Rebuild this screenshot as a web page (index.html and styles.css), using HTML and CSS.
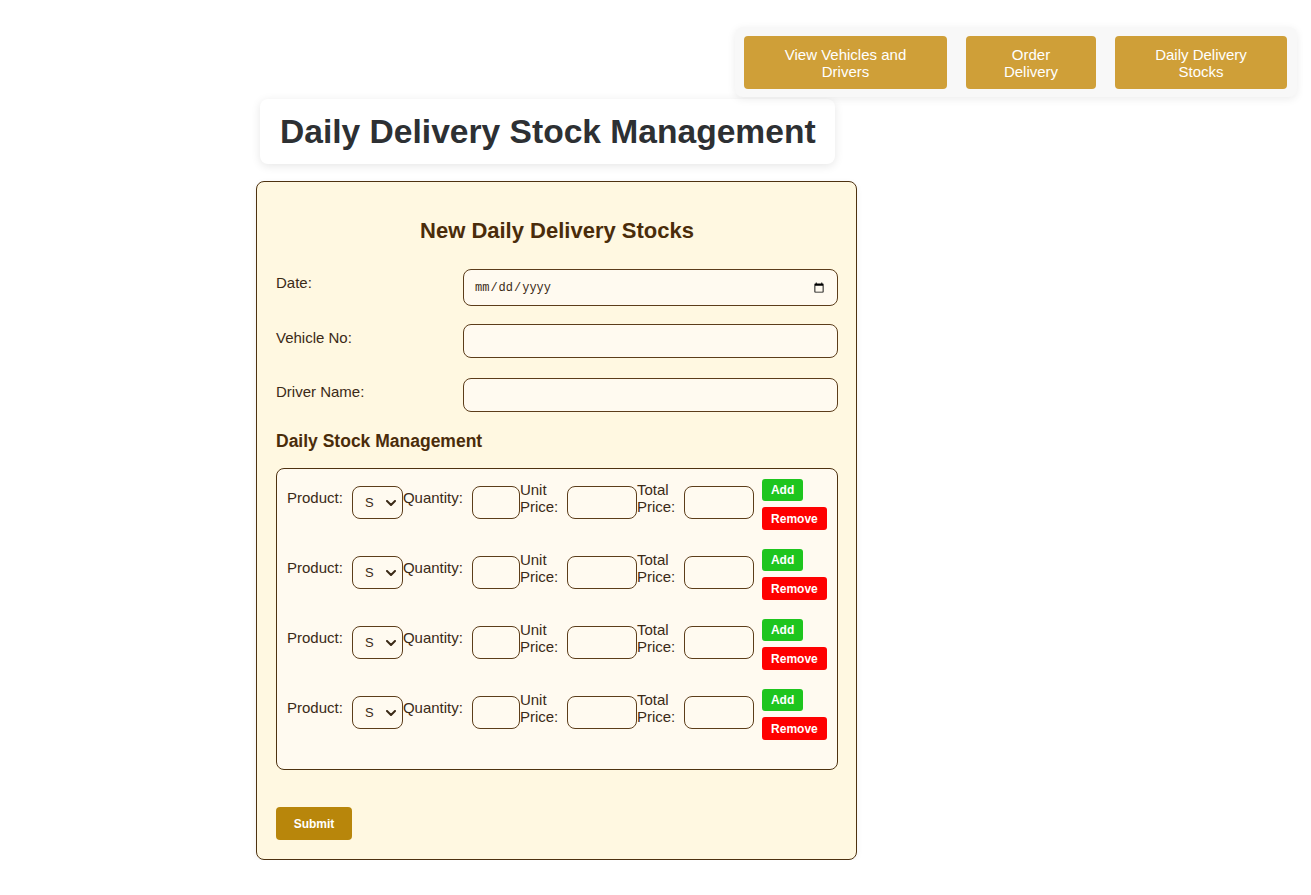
FILE: index.html
```html
<!DOCTYPE html>
<html lang="en">
<head>
<meta charset="utf-8">
<title>Daily Delivery Stock Management</title>
<link rel="stylesheet" href="styles.css">
</head>
<body>
  <div class="nav-row">
    <nav class="nav">
      <button class="nav-btn nav-vehicles">View Vehicles and Drivers</button>
      <button class="nav-btn nav-order">Order Delivery</button>
      <button class="nav-btn nav-stocks">Daily Delivery Stocks</button>
    </nav>
  </div>

  <main class="main">
    <div class="title-box">
      <h1>Daily Delivery Stock Management</h1>
    </div>

    <form class="card">
      <h2>New Daily Delivery Stocks</h2>

      <div class="field field-date">
        <label class="field-label">Date:</label>
        <input class="field-input date-input" type="date">
      </div>
      <div class="field field-vehicle">
        <label class="field-label">Vehicle No:</label>
        <input class="field-input" type="text">
      </div>
      <div class="field">
        <label class="field-label">Driver Name:</label>
        <input class="field-input" type="text">
      </div>

      <h3>Daily Stock Management</h3>

      <div class="stock-box">
        <div class="stock-row">
          <span class="lbl lbl-product">Product:</span>
          <span class="sel-wrap"><select class="sel"><option>S</option></select><svg class="chev" viewBox="0 0 10 6" width="10" height="6"><path d="M1 1l4 4 4-4" fill="none" stroke="#3b2a17" stroke-width="2" stroke-linecap="round" stroke-linejoin="round"/></svg></span>
          <span class="lbl lbl-qty">Quantity:</span>
          <input class="box box-qty" type="text">
          <span class="lbl lbl-wrap">Unit Price:</span>
          <input class="box box-price" type="text">
          <span class="lbl lbl-wrap">Total Price:</span>
          <input class="box box-price box-total" type="text">
          <div class="actions">
            <button type="button" class="btn-add">Add</button>
            <button type="button" class="btn-remove">Remove</button>
          </div>
        </div>
        <div class="stock-row">
          <span class="lbl lbl-product">Product:</span>
          <span class="sel-wrap"><select class="sel"><option>S</option></select><svg class="chev" viewBox="0 0 10 6" width="10" height="6"><path d="M1 1l4 4 4-4" fill="none" stroke="#3b2a17" stroke-width="2" stroke-linecap="round" stroke-linejoin="round"/></svg></span>
          <span class="lbl lbl-qty">Quantity:</span>
          <input class="box box-qty" type="text">
          <span class="lbl lbl-wrap">Unit Price:</span>
          <input class="box box-price" type="text">
          <span class="lbl lbl-wrap">Total Price:</span>
          <input class="box box-price box-total" type="text">
          <div class="actions">
            <button type="button" class="btn-add">Add</button>
            <button type="button" class="btn-remove">Remove</button>
          </div>
        </div>
        <div class="stock-row">
          <span class="lbl lbl-product">Product:</span>
          <span class="sel-wrap"><select class="sel"><option>S</option></select><svg class="chev" viewBox="0 0 10 6" width="10" height="6"><path d="M1 1l4 4 4-4" fill="none" stroke="#3b2a17" stroke-width="2" stroke-linecap="round" stroke-linejoin="round"/></svg></span>
          <span class="lbl lbl-qty">Quantity:</span>
          <input class="box box-qty" type="text">
          <span class="lbl lbl-wrap">Unit Price:</span>
          <input class="box box-price" type="text">
          <span class="lbl lbl-wrap">Total Price:</span>
          <input class="box box-price box-total" type="text">
          <div class="actions">
            <button type="button" class="btn-add">Add</button>
            <button type="button" class="btn-remove">Remove</button>
          </div>
        </div>
        <div class="stock-row">
          <span class="lbl lbl-product">Product:</span>
          <span class="sel-wrap"><select class="sel"><option>S</option></select><svg class="chev" viewBox="0 0 10 6" width="10" height="6"><path d="M1 1l4 4 4-4" fill="none" stroke="#3b2a17" stroke-width="2" stroke-linecap="round" stroke-linejoin="round"/></svg></span>
          <span class="lbl lbl-qty">Quantity:</span>
          <input class="box box-qty" type="text">
          <span class="lbl lbl-wrap">Unit Price:</span>
          <input class="box box-price" type="text">
          <span class="lbl lbl-wrap">Total Price:</span>
          <input class="box box-price box-total" type="text">
          <div class="actions">
            <button type="button" class="btn-add">Add</button>
            <button type="button" class="btn-remove">Remove</button>
          </div>
        </div>
      </div>

      <button type="button" class="btn-submit">Submit</button>
    </form>
  </main>
</body>
</html>
```

FILE: styles.css
```css
* { box-sizing: border-box; }

body {
  margin: 8px;
  background: #ffffff;
  font-family: "Liberation Sans", Arial, sans-serif;
  color: #3b2a17;
}

/* ---------- top navigation ---------- */
.nav-row {
  display: flex;
  justify-content: flex-end;
  padding-top: 19px;
  padding-right: 6px;
}

.nav {
  display: flex;
  gap: 19px;
  padding: 9px 10px 8px 9px;
  background: #f8f8f8;
  border-radius: 8px;
  box-shadow: 0 2px 8px rgba(0, 0, 0, 0.08);
}

.nav-btn {
  height: 53px;
  padding: 0 12px;
  border: none;
  border-radius: 4px;
  background: #cf9f38;
  color: #ffffff;
  font-family: "Liberation Sans", Arial, sans-serif;
  font-size: 15px;
  line-height: 17px;
  text-align: center;
}

.nav-vehicles { width: 203px; padding: 0 36px; }
.nav-order { width: 130px; padding: 0 30px; }
.nav-stocks { width: 172px; padding: 0 36px; }

/* ---------- main column ---------- */
.main {
  margin-left: 248px;
  width: 601px;
  padding-top: 2px;
}

.title-box {
  margin-left: 4px;
  width: 575px;
  height: 65px;
  display: flex;
  align-items: center;
  padding: 0 20px;
  background: #ffffff;
  border-radius: 8px;
  box-shadow: 0 2px 10px rgba(0, 0, 0, 0.1);
}

h1 {
  margin: 0;
  font-size: 33.6px;
  font-weight: bold;
  color: #2d3033;
  white-space: nowrap;
}

/* ---------- form card ---------- */
.card {
  margin-top: 17px;
  padding: 19px 18px 19px 19px;
  background: #fff8e1;
  border: 1px solid #4e3210;
  border-radius: 8px;
  box-shadow: 0 2px 6px rgba(0, 0, 0, 0.06);
}

h2 {
  margin: 17px 0 25px;
  text-align: center;
  font-size: 22px;
  line-height: 26px;
  font-weight: bold;
  color: #4a2c0a;
}

.field {
  display: flex;
  align-items: flex-start;
  margin-bottom: 19px;
}

.field-date { margin-bottom: 18px; }
.field-vehicle { margin-bottom: 20px; }

.field-label {
  width: 187px;
  flex-shrink: 0;
  padding-top: 5px;
  font-size: 15px;
  line-height: 17px;
  color: #3b2a17;
}

.field-input {
  width: 375px;
  height: 34px;
  padding: 0 10px;
  border: 1px solid #5c3d1a;
  border-radius: 8px;
  background: #fffaf0;
  font-family: "Liberation Sans", Arial, sans-serif;
  font-size: 14px;
  color: #3b2a17;
}

.date-input {
  height: 37px;
  font-family: "Liberation Mono", "DejaVu Sans Mono", monospace;
  font-size: 12px;
}

h3 {
  margin: 0 0 17px;
  font-size: 17.5px;
  line-height: 20px;
  font-weight: bold;
  color: #4a2c0a;
}

/* ---------- stock rows ---------- */
.stock-box {
  padding: 10px;
  border: 1px solid #4e3210;
  border-radius: 8px;
  background: #fffaf0;
}

.stock-row {
  display: flex;
  align-items: flex-start;
  margin-bottom: 19px;
}

.stock-row > * { flex-shrink: 0; }

.lbl {
  font-size: 15px;
  line-height: 17px;
  color: #3b2a17;
}

.lbl-product { margin-top: 10px; margin-right: 9px; }
.lbl-qty { margin-top: 10px; margin-right: 9px; }
.lbl-wrap { margin-top: 2px; width: 39px; margin-right: 8px; }

.sel-wrap {
  position: relative;
  display: block;
  margin-top: 7px;
  width: 51px;
  height: 33px;
}

.sel {
  -webkit-appearance: none;
  appearance: none;
  width: 51px;
  height: 33px;
  padding: 0 0 0 12px;
  border: 1px solid #5c3d1a;
  border-radius: 8px;
  background: #fffaf0;
  font-family: "Liberation Sans", Arial, sans-serif;
  font-size: 13px;
  color: #3b2a17;
}

.chev {
  position: absolute;
  left: 34px;
  top: 14px;
  pointer-events: none;
}

.box {
  margin-top: 7px;
  height: 33px;
  padding: 0 6px;
  border: 1px solid #5c3d1a;
  border-radius: 8px;
  background: #fffaf0;
}

.box-qty { width: 48px; }
.box-price { width: 70px; }
.box-total { margin-right: 8px; }

.actions {
  display: flex;
  flex-direction: column;
  align-items: flex-start;
  gap: 6px;
}

.btn-add,
.btn-remove {
  border: none;
  border-radius: 3px;
  color: #ffffff;
  font-family: "Liberation Sans", Arial, sans-serif;
  font-size: 12px;
  font-weight: bold;
  line-height: 14px;
  padding: 4px 9px;
}

.btn-add { background: #1ec51e; width: 41px; height: 22px; }
.btn-remove { background: #fe0000; width: 65px; height: 23px; }

/* ---------- submit ---------- */
.btn-submit {
  margin-top: 37px;
  width: 76px;
  height: 33px;
  border: none;
  border-radius: 4px;
  background: #b8860b;
  color: #ffffff;
  font-family: "Liberation Sans", Arial, sans-serif;
  font-size: 12px;
  font-weight: bold;
}
```
